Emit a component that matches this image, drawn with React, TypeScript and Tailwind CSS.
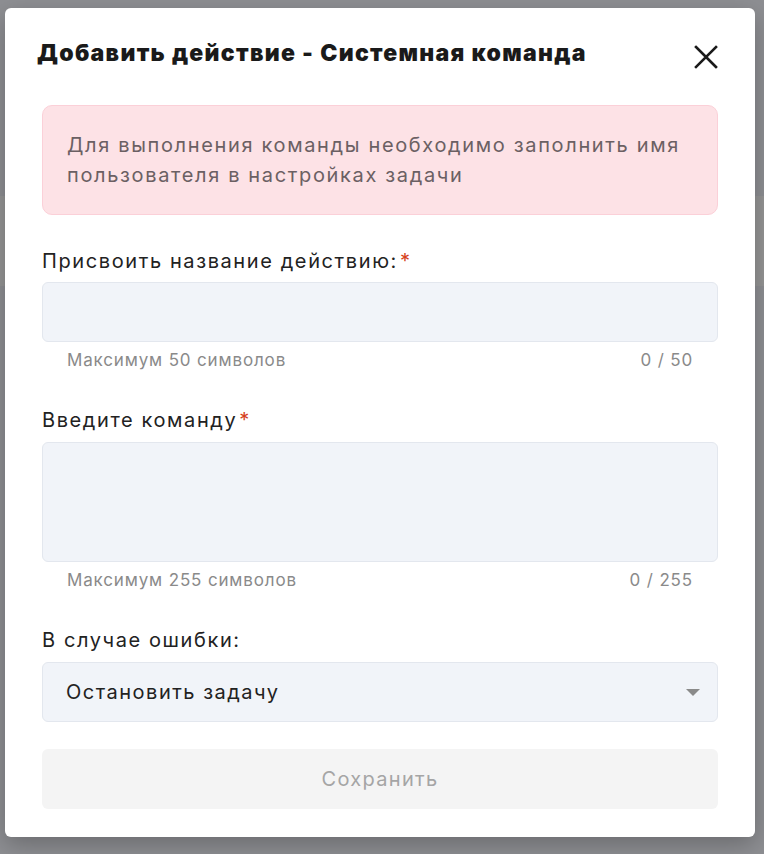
import { useState } from "react";

const font = { fontFamily: "Inter, 'Noto Sans', sans-serif" };

function FieldLabel({ text, required }: { text: string; required?: boolean }) {
  return (
    <label className="block text-[20px] leading-[28px] tracking-[1.6px] text-[#222222]">
      {text}
      {required && <span className="ml-[2px] text-[#d6401c]">*</span>}
    </label>
  );
}

function Helper({ hint, count }: { hint: string; count: string }) {
  return (
    <div className="mt-[8px] flex justify-between px-[25px] text-[17px] leading-[20px] tracking-[0.85px] text-[#8a8a8a]">
      <span>{hint}</span>
      <span>{count}</span>
    </div>
  );
}

export default function App() {
  const [name, setName] = useState("");
  const [cmd, setCmd] = useState("");

  return (
    <div className="relative h-[854px] w-[764px] overflow-hidden bg-[#8e8f93]" style={font}>
      {/* page behind the overlay */}
      <div className="mt-[196px] h-[90px] bg-[#959595]" />

      <div className="absolute left-[5px] top-[8px] w-[750px] rounded-[6px] bg-white pb-[28px] shadow-[0_8px_24px_rgba(0,0,0,0.25)]">
        <div className="flex h-[30px] items-start justify-between pl-[32px] pr-[37px] mt-[31px]">
          <h2 className="text-[23px] font-black leading-[28px] tracking-[1.3px] text-[#1a1a1a]">
            Добавить действие - Системная команда
          </h2>
          <button className="mt-[6px] text-[#1a1a1a]">
            <svg width="24" height="24" viewBox="0 0 24 24" fill="none" stroke="currentColor" strokeWidth="2.6" strokeLinecap="square">
              <path d="M2 2L22 22M22 2L2 22" />
            </svg>
          </button>
        </div>

        <div className="mt-[36px] px-[37px]">
          <div className="rounded-[10px] border border-[#fbd0d8] bg-[#fde2e6] px-[24px] py-[24px] text-[20px] leading-[30px] tracking-[1.65px] text-[#6b6063]">
            Для выполнения команды необходимо заполнить имя пользователя в настройках задачи
          </div>

          <div className="mt-[32px]">
            <FieldLabel text="Присвоить название действию:" required />
            <input
              value={name}
              onChange={(e) => setName(e.target.value)}
              maxLength={50}
              className="mt-[7px] block h-[60px] w-full rounded-[6px] border border-[#e3e7ee] bg-[#f1f4f9] px-[24px] text-[20px] outline-none"
            />
            <Helper hint="Максимум 50 символов" count={`${name.length} / 50`} />
          </div>

          <div className="mt-[36px]">
            <FieldLabel text="Введите команду" required />
            <textarea
              value={cmd}
              onChange={(e) => setCmd(e.target.value)}
              maxLength={255}
              className="mt-[8px] block h-[120px] w-full resize-none rounded-[6px] border border-[#e3e7ee] bg-[#f1f4f9] px-[24px] py-[16px] text-[20px] outline-none"
            />
            <Helper hint="Максимум 255 символов" count={`${cmd.length} / 255`} />
          </div>

          <div className="mt-[36px]">
            <FieldLabel text="В случае ошибки:" />
            <div className="mt-[8px] flex h-[60px] items-center justify-between rounded-[6px] border border-[#e3e7ee] bg-[#f1f4f9] pl-[23px] pr-[17px]">
              <span className="text-[20px] tracking-[1.5px] text-[#222222]">Остановить задачу</span>
              <svg width="14" height="7" viewBox="0 0 14 7">
                <path d="M0 0H14L7 7Z" fill="#8a8a8a" />
              </svg>
            </div>
          </div>

          <button
            disabled
            className="mt-[27px] flex h-[60px] w-full items-center justify-center rounded-[6px] bg-[#f4f4f4] text-[20px] tracking-[1.3px] text-[#a5a5a5]"
          >
            Сохранить
          </button>
        </div>
      </div>
    </div>
  );
}
